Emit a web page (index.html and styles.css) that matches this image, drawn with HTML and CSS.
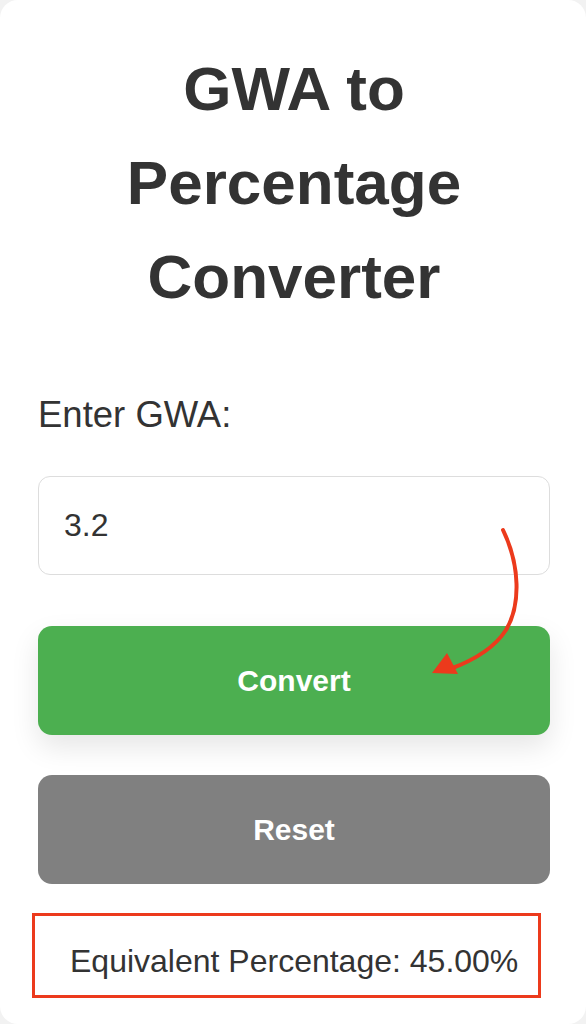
FILE: index.html
```html
<!DOCTYPE html>
<html lang="en">
<head>
  <meta charset="UTF-8" />
  <meta name="viewport" content="width=device-width, initial-scale=1.0"/>
  <title>GWA to Percentage Converter</title>
  <link rel="stylesheet" href="styles.css">
</head>
<body>
  <div class="converter">
    <h1 class="title">GWA to Percentage Converter</h1>

    <label class="field-label" for="gwaInput">Enter GWA:</label>
    <input class="gwa-input" id="gwaInput" type="text" value="3.2" />

    <button class="btn btn-convert" id="convertBtn">Convert</button>
    <button class="btn btn-reset" id="resetBtn">Reset</button>

    <div class="result" id="result">Equivalent Percentage: 45.00%</div>

    <!-- annotation arrow -->
    <svg class="arrow" width="120" height="170" viewBox="0 0 120 170">
      <path d="M 83 10 C 100 45, 101 85, 86 110 C 73 130, 52 141, 30 149" fill="none" stroke="#ec3a1c" stroke-width="4" stroke-linecap="round" />
      <polygon points="12,153 27,133 38,154" fill="#ec3a1c" />
    </svg>
  </div>
</body>
</html>
```

FILE: styles.css
```css
  body {
    font-family: 'Liberation Sans', Arial, sans-serif;
    background-color: #f2f2f2;
    margin: 0;
  }

  .converter {
    position: relative;
    box-sizing: border-box;
    width: 586px;
    height: 1024px;
    background-color: #fff;
    border-radius: 18px;
    padding: 42px 36px 0 38px;
    display: flex;
    flex-direction: column;
    color: #333;
  }

  .title {
    margin: 0 auto;
    width: 400px;
    font-size: 62px;
    line-height: 94px;
    font-weight: bold;
    text-align: center;
    color: #333;
  }

  .field-label {
    margin-top: 71px;
    font-size: 36.5px;
    line-height: 40px;
  }

  .gwa-input {
    margin-top: 41px;
    box-sizing: border-box;
    width: 512px;
    height: 99px;
    padding: 0 25px;
    border: 1.5px solid #ddd;
    border-radius: 12px;
    font-family: inherit;
    font-size: 32px;
    color: #333;
    outline: none;
  }

  .btn {
    box-sizing: border-box;
    width: 512px;
    height: 109px;
    border: none;
    border-radius: 14px;
    color: #fff;
    font-family: inherit;
    font-size: 30px;
    font-weight: bold;
    cursor: pointer;
  }

  .btn-convert {
    margin-top: 51px;
    background-color: #4caf50;
    box-shadow: 0 12px 28px rgba(0,0,0,0.1);
  }

  .btn-reset {
    margin-top: 40px;
    background-color: #808080;
  }

  .result {
    margin-top: 29px;
    margin-left: -6px;
    box-sizing: border-box;
    width: 509px;
    height: 85px;
    border: 3px solid #ec3a1c;
    padding: 27px 0 0 35px;
    font-size: 32px;
    line-height: 36px;
    color: #333;
  }

  .arrow {
    position: absolute;
    left: 420px;
    top: 520px;
    overflow: visible;
  }
```
